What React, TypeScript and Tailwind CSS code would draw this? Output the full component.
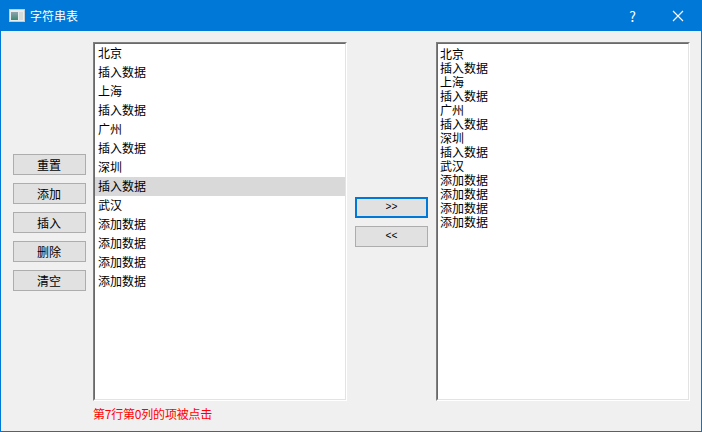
import type { ReactNode } from "react";

const items = ["北京", "插入数据", "上海", "插入数据", "广州", "插入数据", "深圳", "插入数据", "武汉", "添加数据", "添加数据", "添加数据", "添加数据"];
const actions = ["重置", "添加", "插入", "删除", "清空"];

function TitleIcon() {
  return (
    <svg width="16" height="13" viewBox="0 0 16 13" className="shrink-0">
      <defs>
        <linearGradient id="pane" x1="0" y1="0" x2="0" y2="1">
          <stop offset="0" stopColor="#8fa3b0" />
          <stop offset="1" stopColor="#3f8a70" />
        </linearGradient>
      </defs>
      <rect x="0.5" y="0.5" width="15" height="12" fill="#e9eced" stroke="#c4ccd2" />
      <rect x="2" y="3" width="7" height="8" fill="url(#pane)" />
      <rect x="10" y="3" width="4" height="8" fill="#d5dcd8" />
    </svg>
  );
}

function PushButton({ label }: { label: string }) {
  return (
    <button className="flex h-[21px] w-[73px] items-center justify-center border border-[#adadad] bg-[#e1e1e1] pr-px text-xs text-black">
      {label}
    </button>
  );
}

function ArrowButton({ label, focused }: { label: string; focused?: boolean }) {
  return (
    <button
      className={
        focused
          ? "flex h-[21px] w-[73px] items-center justify-center border-2 border-[#0078d7] bg-[#e1e1e1] font-['Liberation_Mono',monospace] text-[10px] text-black"
          : "flex h-[21px] w-[73px] items-center justify-center border border-[#adadad] bg-[#e1e1e1] font-['Liberation_Mono',monospace] text-[10px] text-black"
      }
    >
      {label}
    </button>
  );
}

function ListFrame({ children }: { children: ReactNode }) {
  return (
    <div className="h-[359px] w-[254px] border border-white border-l-[#7f7f7f] border-t-[#7f7f7f]">
      <div className="h-full border border-[#e3e3e3] border-l-[#696969] border-t-[#696969] bg-white">
        {children}
      </div>
    </div>
  );
}

export default function App() {
  return (
    <div className="flex h-[432px] w-[702px] flex-col overflow-hidden border-x border-b border-[#0078d7] bg-[#f0f0f0] font-['Noto_Sans_CJK_SC',sans-serif]">
      <div className="flex h-[31px] shrink-0 items-center bg-[#0078d7] pl-2 text-xs text-white">
        <TitleIcon />
        <span className="ml-[5px]">字符串表</span>
        <span className="ml-auto mr-[36px] text-sm">?</span>
        <svg width="12" height="12" viewBox="0 0 12 12" className="mr-[17px]" fill="none" stroke="white" strokeWidth="1.1">
          <path d="M1 1 L11 11 M11 1 L1 11" />
        </svg>
      </div>

      <div className="flex flex-1 pl-3 pt-[11px]">
        <div className="mt-[112px] flex flex-col gap-2">
          {actions.map((a) => (
            <PushButton key={a} label={a} />
          ))}
        </div>

        <div className="ml-[7px] flex w-[254px] flex-col">
          <ListFrame>
            {items.map((item, i) => (
              <div
                key={i}
                className={
                  i === 7
                    ? "flex h-[19px] items-center bg-[#d9d9d9] pb-[2px] pl-[3px] text-xs text-black"
                    : "flex h-[19px] items-center pb-[2px] pl-[3px] text-xs text-black"
                }
              >
                {item}
              </div>
            ))}
          </ListFrame>
          <div className="mt-[5px] text-xs leading-[16px] tracking-[-0.2px] text-[#ff0000]">第7行第0列的项被点击</div>
        </div>

        <div className="ml-2 mt-[155px] flex flex-col gap-2">
          <ArrowButton label=">>" focused />
          <ArrowButton label="<<" />
        </div>

        <div className="ml-2">
          <ListFrame>
            <div className="pl-[2px] pt-[3px]">
              {items.map((item, i) => (
                <div key={i} className="h-[14px] text-xs leading-[14px] text-black">
                  {item}
                </div>
              ))}
            </div>
          </ListFrame>
        </div>
      </div>
    </div>
  );
}
